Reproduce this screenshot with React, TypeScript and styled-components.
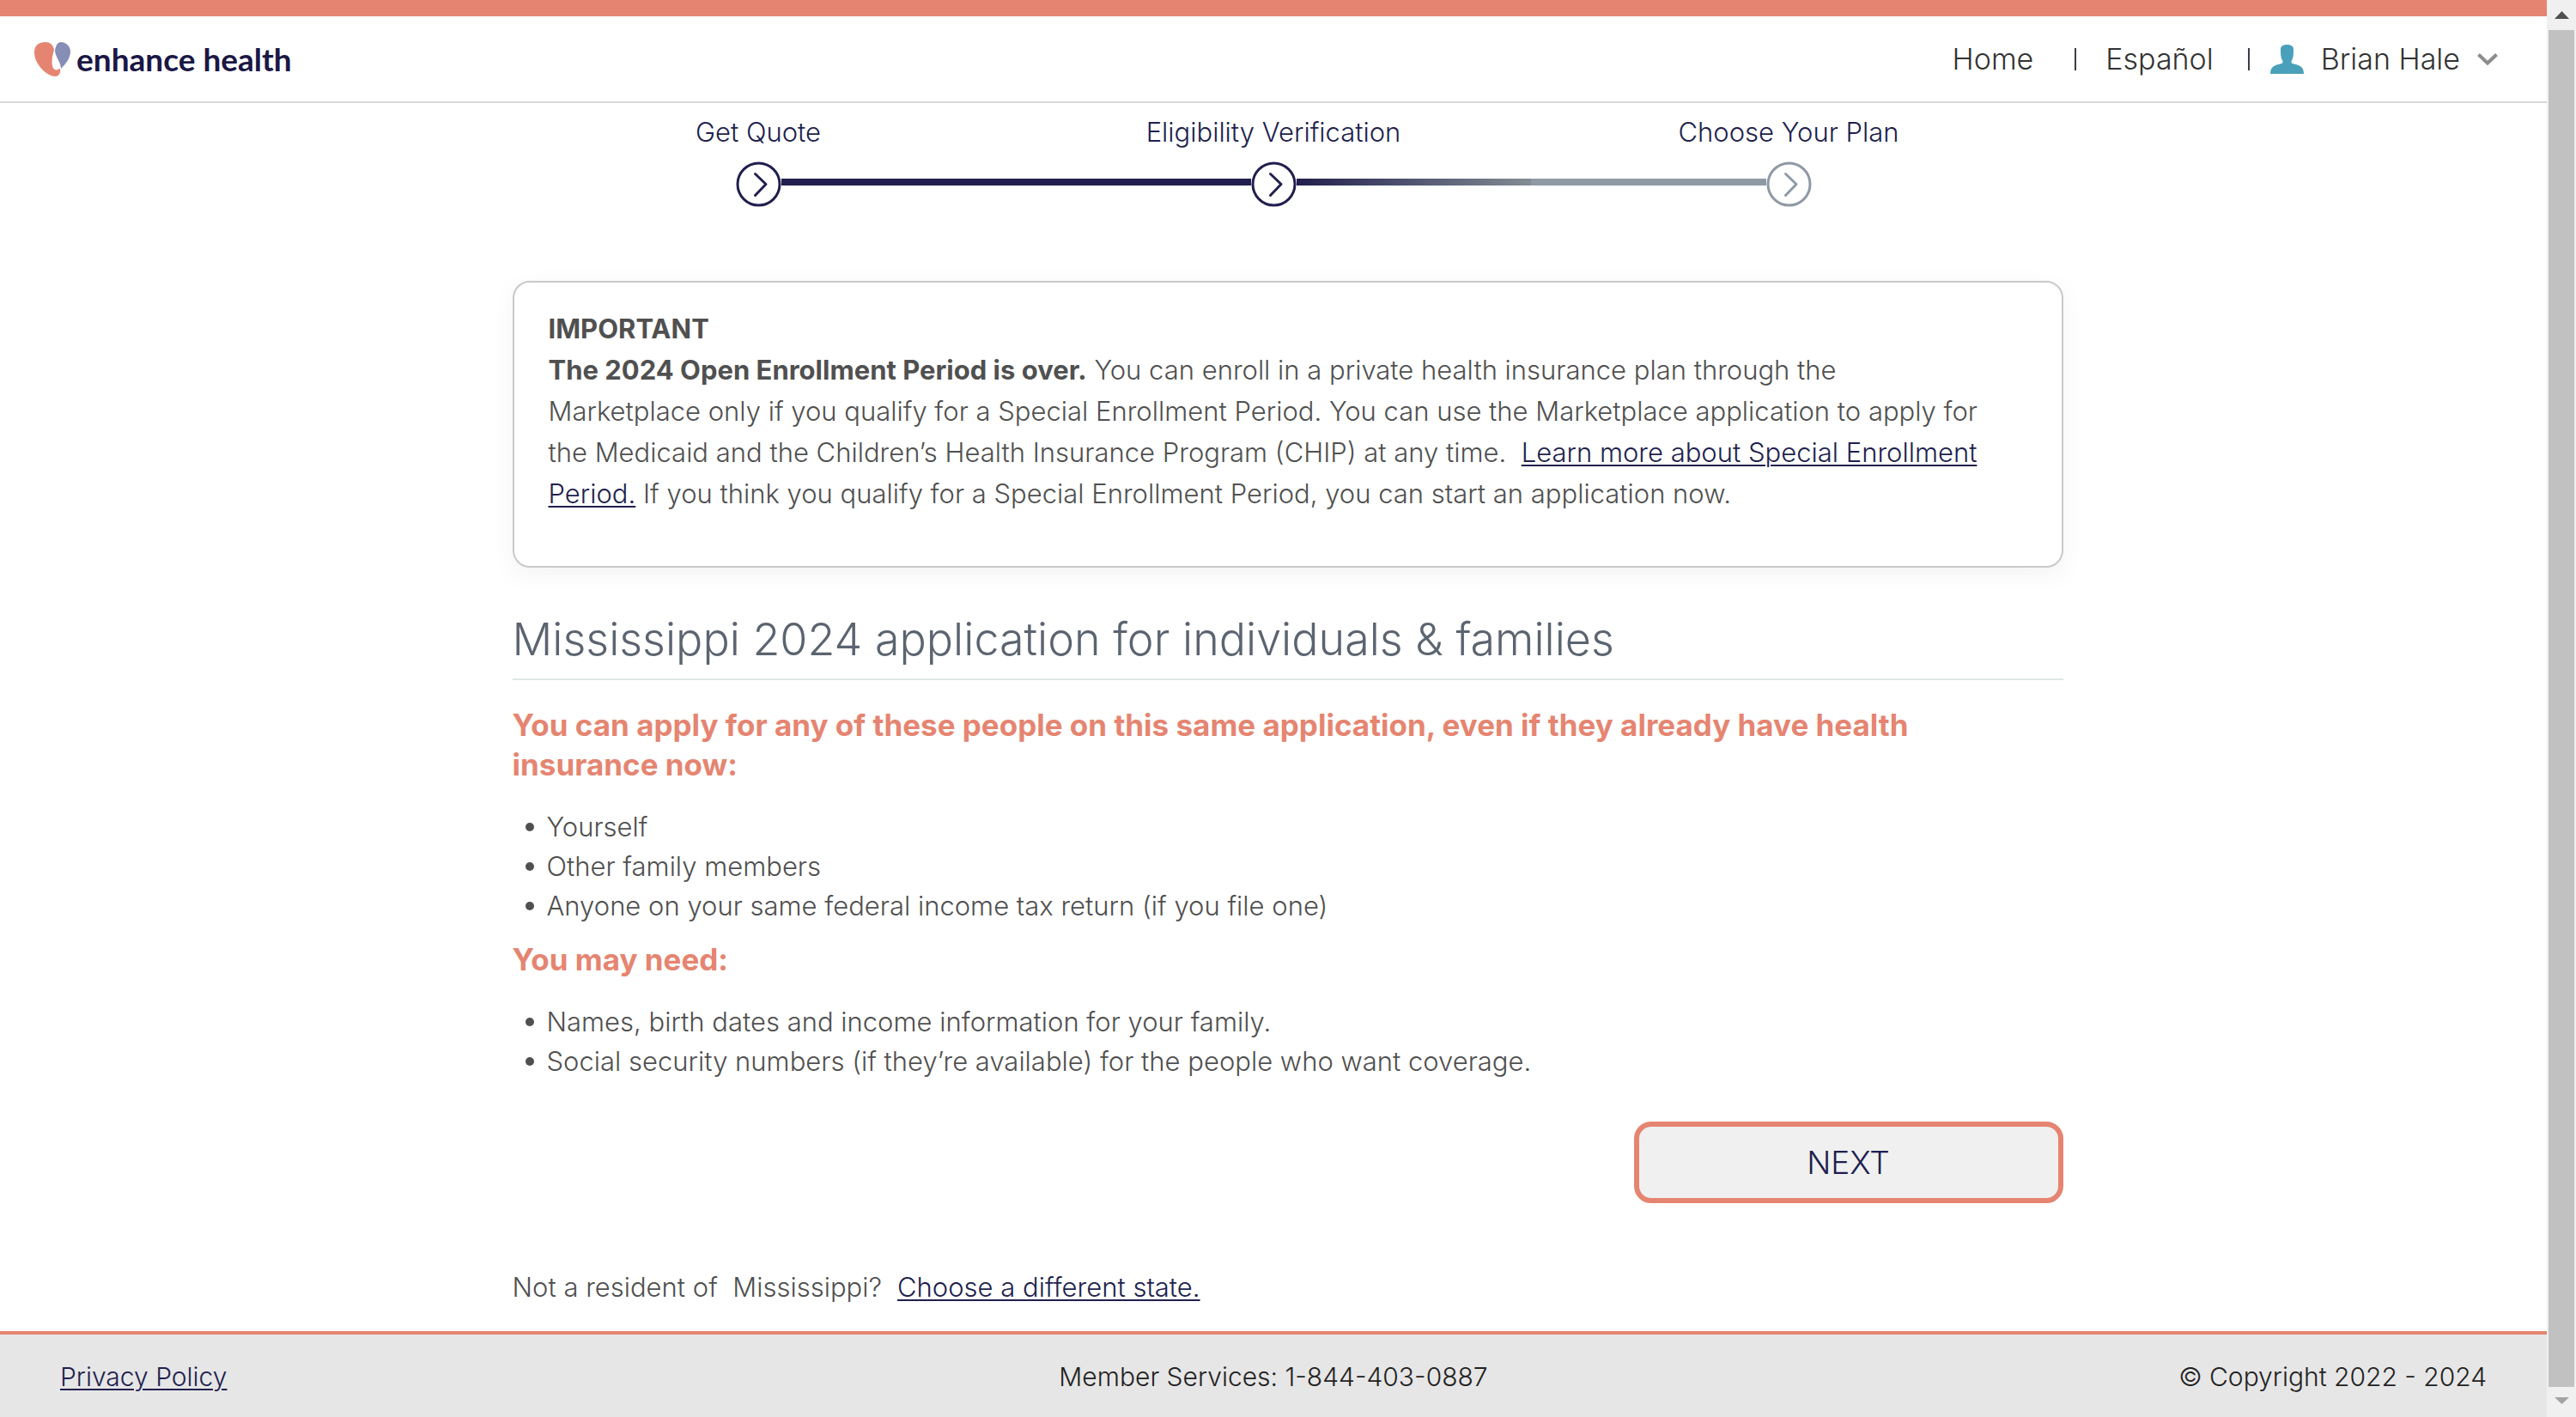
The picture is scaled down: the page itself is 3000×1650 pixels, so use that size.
import React from "react";
import styled, { createGlobalStyle } from "styled-components";

const coral = "#e58571";
const navy = "#211f4e";
const grey = "#8f99a6";

const Global = createGlobalStyle`
  *, *::before, *::after { box-sizing: border-box; }
  body { margin: 0; background: #fff; color: #505050;
    font-family: Inter, "Open Sans", sans-serif; font-size: 31px; font-weight: 300; line-height: 46px; }
  h1, h2, p, ul, ol { margin: 0; padding: 0; }
  strong { font-weight: 700; }
`;

const Window = styled.div`display: flex; align-items: stretch; min-height: 100vh;`;
const Page = styled.div`flex: 1; min-width: 0; display: flex; flex-direction: column;`;

const Header = styled.header`
  display: flex; align-items: center; justify-content: space-between;
  height: 120px; padding: 0 57px 0 40px;
  border-top: 19px solid ${coral}; border-bottom: 2px solid #d9d9d9;
`;
const Brand = styled.a`
  display: flex; align-items: center; gap: 7px; text-decoration: none;
  color: #1b1745; font-family: Lato, sans-serif; font-size: 37px; font-weight: 700;
`;
const Nav = styled.nav`display: flex; align-items: center; font-size: 34px; color: #333;`;
const NavLink = styled.a`color: inherit; text-decoration: none;`;
const Divider = styled.span<{ $before: number; $after: number }>`
  width: 2px; height: 26px; background: #3c3c46;
  margin: 0 ${(p) => p.$after}px 0 ${(p) => p.$before}px;
`;
const UserButton = styled.button`
  display: flex; align-items: center; gap: 20px; border: 0; padding: 0; background: none;
  font: inherit; color: inherit; cursor: pointer;
`;

const Steps = styled.ol`
  list-style: none; display: flex; justify-content: center; padding-top: 11px;
`;
const Step = styled.li`
  width: 600px; display: flex; flex-direction: column; align-items: center; gap: 11px;
  color: ${navy};
`;
const Track = styled.div`display: flex; align-items: center; width: 100%; height: 53px;`;
const Line = styled.span<{ $fill: string }>`
  flex: 1; height: 8px; margin-bottom: 5px; background: ${(p) => p.$fill};
`;
const Circle = styled.svg<{ $tone: string }>`
  width: 53px; height: 53px; fill: none; stroke: ${(p) => p.$tone}; stroke-width: 3;
  stroke-linecap: round; stroke-linejoin: round;
`;

const Body = styled.div`flex: 1; padding-left: 33px;`;
const Content = styled.main`
  width: 100%; max-width: 1806px; margin: 0 auto; padding-top: 86px;
`;
const Notice = styled.section`
  border: 2px solid #c9c9c9; border-radius: 20px; padding: 30px 84px 60px 40px; line-height: 48px;
  box-shadow: 0 8px 30px rgba(0, 0, 0, 0.05);
`;
const TextLink = styled.a`
  color: ${navy}; text-decoration: underline; text-decoration-thickness: 2px; text-underline-offset: 3px;
`;
const Title = styled.h1`
  margin-top: 50px; padding-bottom: 11px; border-bottom: 2px solid #dfe7e4;
  color: #5b6470; font-size: 52px; font-weight: 300; line-height: 68px;
`;
const Subtitle = styled.h2<{ $gap: number }>`
  margin-top: ${(p) => p.$gap}px; padding-right: 48px;
  color: ${coral}; font-size: 35px; font-weight: 700; line-height: 46px;
`;
const List = styled.ul`list-style: none; margin-top: 27px;`;
const Item = styled.li`
  display: flex; align-items: center; gap: 15px; padding-left: 15px;
  &::before { content: ""; width: 10px; height: 10px; border-radius: 50%; background: #505050; }
`;
const Actions = styled.div`display: flex; justify-content: flex-end; margin-top: 47px;`;
const NextButton = styled.button`
  width: 500px; height: 95px; border: 6px solid ${coral}; border-radius: 20px; background: #f0f0f0;
  color: ${navy}; font: inherit; font-size: 37px; cursor: pointer;
`;
const Resident = styled.p`
  display: flex; gap: 18px; margin-top: 75px; padding-bottom: 25px;
`;

const Footer = styled.footer`
  display: grid; grid-template-columns: 1fr auto 1fr; align-items: center;
  height: 100px; padding: 2px 70px 0; border-top: 4px solid ${coral};
  background: #e6e6e6; color: #222; font-size: 30px;
`;
const Copyright = styled.span`justify-self: end;`;
const PolicyLink = styled(TextLink)`justify-self: start;`;

const ScrollBar = styled.div`
  width: 34px; display: flex; flex-direction: column; align-items: center; background: #f0f0f0;
`;
const ScrollArrow = styled.svg`width: 17px; height: 35px;`;
const Thumb = styled.div`flex: 1; width: 30px; background: #c1c1c1;`;

const Heart = () => (
  <svg width="42" height="40" viewBox="0 0 42 40" aria-hidden="true">
    <path fill={coral} d="M0 12C0 4 5 0 13 0c6 0 9 4 10 9C22 13 20.500 17 20.500 23c0 6 2 9.500 5 9.500 2 0 3-1.500 4.500-1.500 1 4-1 9-6 9C15 40 0 26 0 12Z" />
    <path fill="#868eb5" d="M31 31C31 24 24 16 24 10c1-6 3-10 7-10 6 0 11 5 11 11 0 8-6 15-11 20Z" />
  </svg>
);
const Person = () => (
  <svg width="39" height="34" viewBox="0 0 39 34" aria-hidden="true">
    <path fill="#4aa0bb" d="M19.500 0c4 0 7.500 1.500 7.500 5 0 5 0 8-1 11-.5 2-1.500 2-1.500 4 0 1.500 1 2 3 2.500 7 1.500 11.500 3.500 11.500 11.500H0c0-8 4.500-10 11.500-11.500 2-.5 3-1 3-2.500 0-2-1-2-1.500-4-1-3-1-6-1-11 0-3.500 3.500-5 7.500-5Z" />
  </svg>
);
const Chevron = () => (
  <svg width="24" height="14" viewBox="0 0 24 14" fill="none" stroke="#8c8c8c" strokeWidth="4" aria-hidden="true">
    <path d="M1.500 1.500 12 11.500 22.500 1.500" />
  </svg>
);

const steps = [
  { label: "Get Quote", tone: navy, left: "transparent", right: navy },
  { label: "Eligibility Verification", tone: navy, left: navy, right: `linear-gradient(90deg, ${navy}, #848c93)` },
  { label: "Choose Your Plan", tone: grey, left: grey, right: "transparent" },
];

const people = ["Yourself", "Other family members", "Anyone on your same federal income tax return (if you file one)"];
const needs = [
  "Names, birth dates and income information for your family.",
  "Social security numbers (if they’re available) for the people who want coverage.",
];

export default function App() {
  return (
    <Window>
      <Global />
      <Page>
        <Header>
          <Brand href="#"><Heart />enhance health</Brand>
          <Nav>
            <NavLink href="#">Home</NavLink>
            <Divider $before={48} $after={34} />
            <NavLink href="#">Español</NavLink>
            <Divider $before={40} $after={24} />
            <UserButton type="button"><Person />Brian Hale<Chevron /></UserButton>
          </Nav>
        </Header>
        <Steps>
          {steps.map((s) => (
            <Step key={s.label}>
              {s.label}
              <Track>
                <Line $fill={s.left} />
                <Circle $tone={s.tone} viewBox="0 0 53 53">
                  <circle cx="26.500" cy="26.500" r="24.500" />
                  <path d="M22.500 14.500 35 26.500 22.500 39.500" />
                </Circle>
                <Line $fill={s.right} />
              </Track>
            </Step>
          ))}
        </Steps>
        <Body>
          <Content>
            <Notice>
              <strong>IMPORTANT</strong>
              <p>
                <strong>The 2024 Open Enrollment Period is over.</strong> You can enroll in a private health
                insurance plan through the Marketplace only if you qualify for a Special Enrollment Period. You can
                use the Marketplace application to apply for the Medicaid and the Children’s Health Insurance
                Program (CHIP) at any time.&nbsp; <TextLink href="#">Learn more about Special Enrollment Period.</TextLink>{" "}
                If you think you qualify for a Special Enrollment Period, you can start an application now.
              </p>
            </Notice>
            <Title>Mississippi 2024 application for individuals &amp; families</Title>
            <Subtitle $gap={29}>
              You can apply for any of these people on this same application, even if they already have health
              insurance now:
            </Subtitle>
            <List>{people.map((t) => <Item key={t}>{t}</Item>)}</List>
            <Subtitle $gap={16}>You may need:</Subtitle>
            <List>{needs.map((t) => <Item key={t}>{t}</Item>)}</List>
            <Actions><NextButton type="button">NEXT</NextButton></Actions>
            <Resident>
              <span>Not a resident of&nbsp; Mississippi?</span>
              <TextLink href="#">Choose a different state.</TextLink>
            </Resident>
          </Content>
        </Body>
        <Footer>
          <PolicyLink href="#">Privacy Policy</PolicyLink>
          <span>Member Services: 1-844-403-0887</span>
          <Copyright>© Copyright 2022 - 2024</Copyright>
        </Footer>
      </Page>
      <ScrollBar aria-hidden="true">
        <ScrollArrow viewBox="0 0 17 35"><path fill="#505050" d="M0 22 8.500 13 17 22Z" /></ScrollArrow>
        <Thumb />
        <ScrollArrow viewBox="0 0 17 35"><path fill="#a3a3a3" d="M0 12H17L8.500 20Z" /></ScrollArrow>
      </ScrollBar>
    </Window>
  );
}
